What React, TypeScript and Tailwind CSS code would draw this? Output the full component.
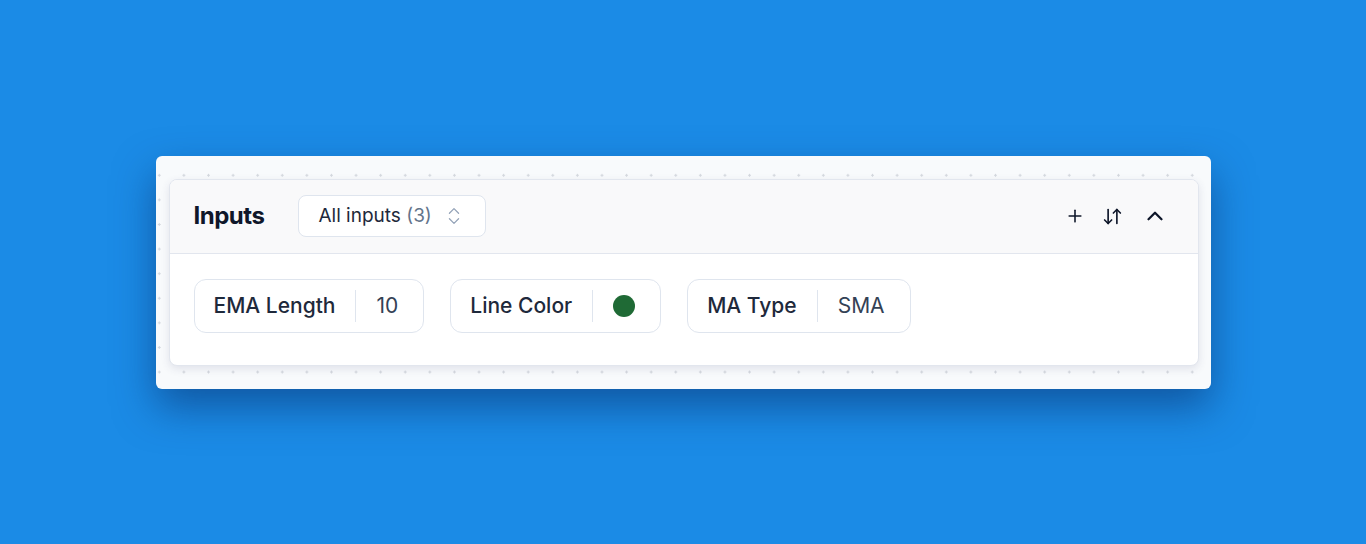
import React from "react";
import { ArrowDownUp, ChevronUp, ChevronsUpDown, Plus } from "lucide-react";

type InputChip = {
  label: string;
  value?: string;
  color?: string;
};

const inputs: InputChip[] = [
  { label: "EMA Length", value: "10" },
  { label: "Line Color", color: "#1f6a35" },
  { label: "MA Type", value: "SMA" },
];

const Chip = ({ chip }: { chip: InputChip }) => (
  <div className="flex h-[54px] items-center rounded-xl border border-[#dfe5ee] bg-white pl-[19px] pr-[25px]">
    <span className="text-[21px] font-medium text-[#1e293b]">{chip.label}</span>
    <span className="mx-5 h-8 w-px bg-[#dfe5ee]" />
    {chip.color ? (
      <span className="h-[22px] w-[22px] rounded-full bg-[#1f6a35]" />
    ) : (
      <span className="text-[21px] text-[#334155]">{chip.value}</span>
    )}
  </div>
);

export default function App() {
  return (
    <div
      className="flex h-[544px] w-full items-center justify-center bg-[#1b8be6]"
      style={{ fontFamily: "Inter, 'Noto Sans', sans-serif" }}
    >
      <div className="w-[1055px] rounded-md bg-[#f8fafc] bg-[radial-gradient(circle,#d4d8de_1.2px,transparent_1.4px)] bg-[size:24.6px_24.6px] bg-[position:-9px_7px] py-[23px] pl-[13px] pr-[12px] shadow-[0_18px_40px_rgba(8,45,105,0.55)]">
        <div className="overflow-hidden rounded-lg border border-[#e2e6ee] bg-white shadow-[0_3px_8px_rgba(60,60,110,0.12)]">
          <div className="flex h-[74px] items-center border-b border-[#e2e6ee] bg-[#f9f9fa] pl-[24px] pr-[30px]">
            <h2 className="text-[24px] font-bold tracking-[-0.02em] text-[#0f172a]">Inputs</h2>
            <button className="ml-[34px] flex h-[42px] w-[188px] items-center justify-between rounded-lg border border-[#dfe5ee] bg-white pl-[19px] pr-[20px] text-[19px] text-[#1e293b]">
              <span>
                All inputs <span className="text-[#64748b]">(3)</span>
              </span>
              <ChevronsUpDown size={22} strokeWidth={1.4} className="text-[#94a3b8]" />
            </button>
            <div className="ml-auto flex items-center text-[#0f172a]">
              <Plus size={20} strokeWidth={1.9} />
              <ArrowDownUp size={21} strokeWidth={1.9} className="ml-[17px]" />
              <ChevronUp size={26} strokeWidth={2.1} className="ml-[19px]" />
            </div>
          </div>
          <div className="flex items-center gap-[26px] pb-[32px] pl-[24px] pt-[25px]">
            {inputs.map((c) => (
              <Chip key={c.label} chip={c} />
            ))}
          </div>
        </div>
      </div>
    </div>
  );
}
